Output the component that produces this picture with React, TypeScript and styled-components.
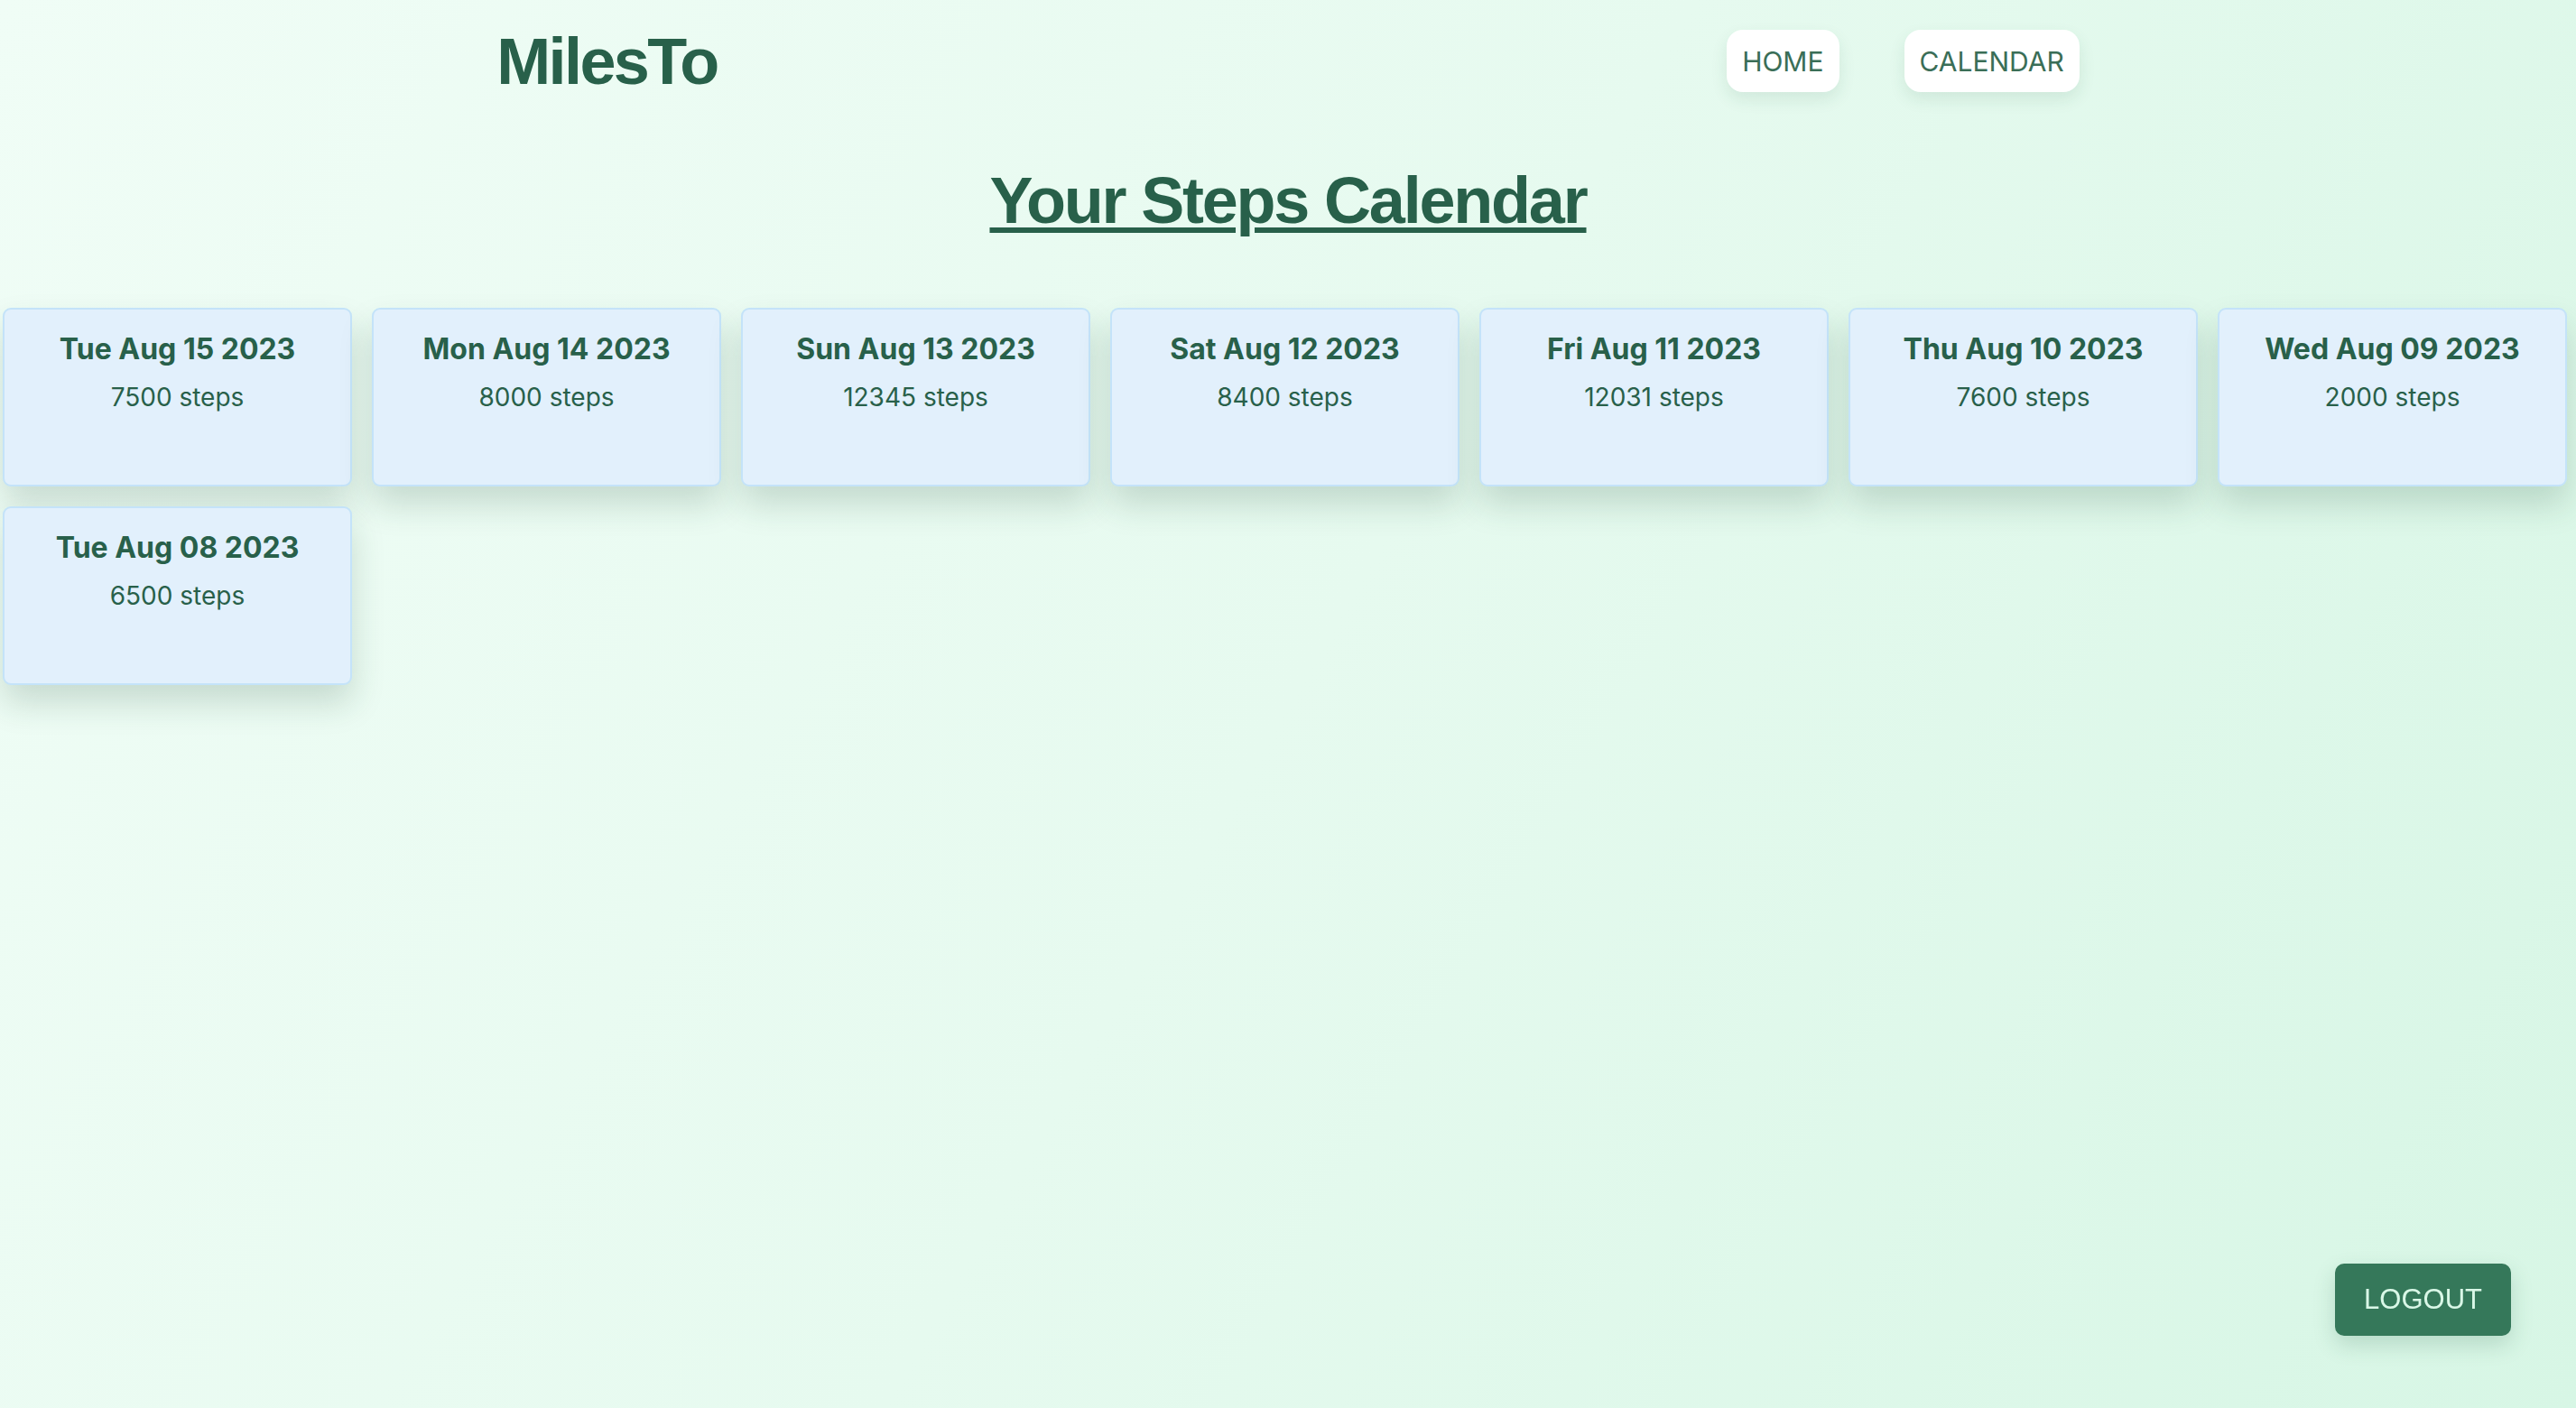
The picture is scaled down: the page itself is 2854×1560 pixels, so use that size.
import React from "react";
import styled, { createGlobalStyle } from "styled-components";

const GlobalStyle = createGlobalStyle`
  html, body {
    margin: 0;
    padding: 0;
  }
  body {
    min-height: 100vh;
    font-family: Inter, "Noto Sans", sans-serif;
    background: linear-gradient(120deg, #f0fdf6 0%, #e6faef 50%, #d7f6e5 100%);
    background-attachment: fixed;
  }
  #root {
    min-height: 100vh;
  }
`;

const Page = styled.div`
  min-height: 100vh;
  display: flex;
  flex-direction: column;
`;

const Header = styled.header`
  height: 135px;
  display: flex;
  align-items: center;
  justify-content: space-around;
`;

const Logo = styled.h1`
  margin: 0 18px 0 0;
  font-family: "Liberation Sans", Arial, sans-serif;
  font-weight: 700;
  font-size: 72px;
  line-height: 1;
  letter-spacing: -2.6px;
  color: #28604a;
`;

const Nav = styled.nav`
  display: flex;
  gap: 72px;
  align-items: center;
`;

const NavButton = styled.button`
  height: 69px;
  padding: 0 17px;
  border: none;
  border-radius: 18px;
  background: #ffffff;
  color: #3a6e57;
  font-family: Inter, "Noto Sans", sans-serif;
  font-size: 30px;
  font-weight: 400;
  box-shadow: 0 8px 18px rgba(30, 90, 60, 0.1);
  cursor: pointer;
`;

const Title = styled.h2`
  margin: 51px 0 83px;
  text-align: center;
  font-family: "Liberation Sans", Arial, sans-serif;
  font-weight: 700;
  font-size: 72px;
  line-height: 1;
  letter-spacing: -2.2px;
  color: #28604a;
  text-decoration: underline;
  text-decoration-thickness: 6px;
  text-underline-offset: 5px;
`;

const Grid = styled.div`
  display: grid;
  grid-template-columns: repeat(7, 387px);
  column-gap: 22px;
  row-gap: 22px;
  padding: 0 3px;
`;

const Card = styled.div`
  box-sizing: border-box;
  height: 198px;
  padding-top: 25px;
  border: 2px solid #c4e3f9;
  border-radius: 9px;
  background: #e2f0fc;
  box-shadow: 0 20px 36px rgba(30, 70, 50, 0.18);
  text-align: center;
  color: #28604a;
`;

const CardDate = styled.div`
  font-size: 32px;
  font-weight: 700;
  line-height: 38px;
`;

const CardSteps = styled.div`
  margin-top: 17px;
  font-size: 28px;
  font-weight: 400;
  line-height: 34px;
`;

const LogoutButton = styled.button`
  position: fixed;
  right: 72px;
  bottom: 80px;
  width: 195px;
  height: 80px;
  border: none;
  border-radius: 10px;
  background: #35785a;
  color: #d9f7e7;
  font-family: "Liberation Sans", Arial, sans-serif;
  font-size: 31px;
  box-shadow: 0 10px 24px rgba(30, 90, 60, 0.18);
  cursor: pointer;
`;

const entries = [
  { date: "Tue Aug 15 2023", steps: 7500 },
  { date: "Mon Aug 14 2023", steps: 8000 },
  { date: "Sun Aug 13 2023", steps: 12345 },
  { date: "Sat Aug 12 2023", steps: 8400 },
  { date: "Fri Aug 11 2023", steps: 12031 },
  { date: "Thu Aug 10 2023", steps: 7600 },
  { date: "Wed Aug 09 2023", steps: 2000 },
  { date: "Tue Aug 08 2023", steps: 6500 },
];

export default function App() {
  return (
    <>
      <GlobalStyle />
      <Page>
        <Header>
          <Logo>MilesTo</Logo>
          <Nav>
            <NavButton>HOME</NavButton>
            <NavButton>CALENDAR</NavButton>
          </Nav>
        </Header>
        <Title>Your Steps Calendar</Title>
        <Grid>
          {entries.map((e) => (
            <Card key={e.date}>
              <CardDate>{e.date}</CardDate>
              <CardSteps>{e.steps} steps</CardSteps>
            </Card>
          ))}
        </Grid>
      </Page>
      <LogoutButton>LOGOUT</LogoutButton>
    </>
  );
}
